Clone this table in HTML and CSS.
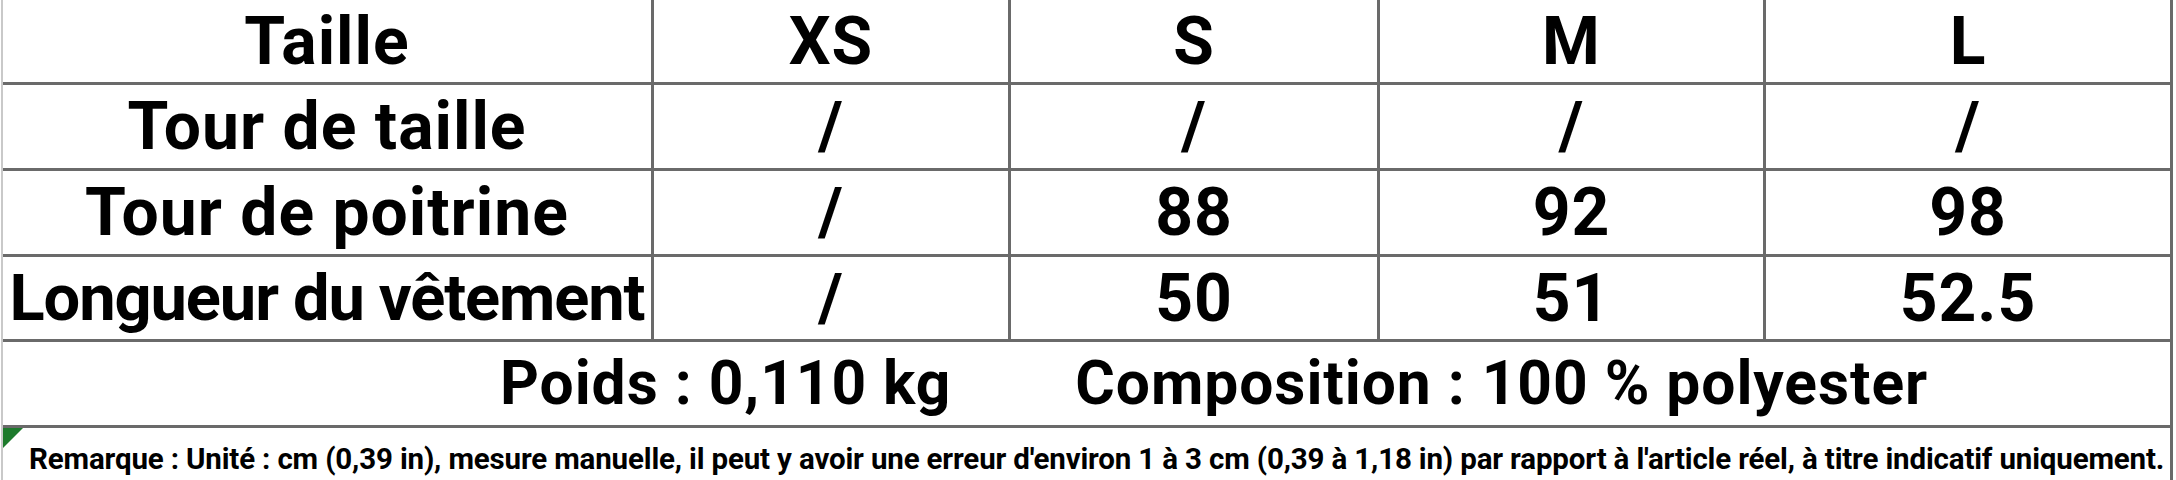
FILE: index.html
```html
<!DOCTYPE html>
<html lang="fr">
<head>
<meta charset="utf-8">
<title>Tableau des tailles</title>
<link rel="stylesheet" href="styles.css">
</head>
<body>
<div class="sheet">
  <div class="cell">Taille</div>
  <div class="cell">XS</div>
  <div class="cell">S</div>
  <div class="cell">M</div>
  <div class="cell">L</div>

  <div class="cell">Tour de taille</div>
  <div class="cell">/</div>
  <div class="cell">/</div>
  <div class="cell">/</div>
  <div class="cell">/</div>

  <div class="cell">Tour de poitrine</div>
  <div class="cell">/</div>
  <div class="cell">88</div>
  <div class="cell">92</div>
  <div class="cell">98</div>

  <div class="cell long">Longueur du vêtement</div>
  <div class="cell">/</div>
  <div class="cell">50</div>
  <div class="cell">51</div>
  <div class="cell">52.5</div>

  <div class="cell info">
    <span class="weight">Poids : 0,110 kg</span>
    <span class="compo">Composition : 100 % polyester</span>
  </div>

  <div class="cell note">
    <span class="marker"></span>
    <span class="note-text">Remarque : Unité : cm (0,39 in), mesure manuelle, il peut y avoir une erreur d'environ 1 à 3 cm (0,39 à 1,18 in) par rapport à l'article réel, à titre indicatif uniquement.</span>
  </div>
</div>
</body>
</html>
```
FILE: styles.css
```css
html, body {
  margin: 0;
  padding: 0;
  background: #ffffff;
}

body {
  width: 2176px;
  height: 480px;
  overflow: hidden;
  font-family: Roboto, "Liberation Sans", sans-serif;
  color: #000;
}

.sheet {
  margin-left: 1px;
  width: 2172px;
  box-sizing: border-box;
  border-left: 2px solid #c9c9c9;
  border-right: 3px solid #6a6a6a;
  display: grid;
  grid-template-columns: 648px 354px 366px 383px 404px;
  grid-template-rows: 82px 83px 83px 82px 83px 60px;
  gap: 3px;
  background: #6a6a6a;
}

.cell {
  background: #ffffff;
  display: flex;
  align-items: center;
  justify-content: center;
  font-weight: 700;
  font-size: 66px;
  letter-spacing: 1px;
  white-space: nowrap;
}

.long {
  font-size: 65px;
  letter-spacing: -1.1px;
}

.info {
  grid-column: 1 / -1;
  justify-content: flex-start;
  padding-left: 497px;
  gap: 124px;
  font-size: 60.5px;
  letter-spacing: 0.95px;
}

.note {
  grid-column: 1 / -1;
  position: relative;
  justify-content: flex-start;
  align-items: flex-start;
  padding-left: 26px;
  padding-top: 14px;
  font-size: 29.5px;
  letter-spacing: -0.16px;
}

.marker {
  position: absolute;
  left: 0;
  top: 0;
  width: 0;
  height: 0;
  border-top: 20px solid #1d7a2c;
  border-right: 20px solid transparent;
}
```
